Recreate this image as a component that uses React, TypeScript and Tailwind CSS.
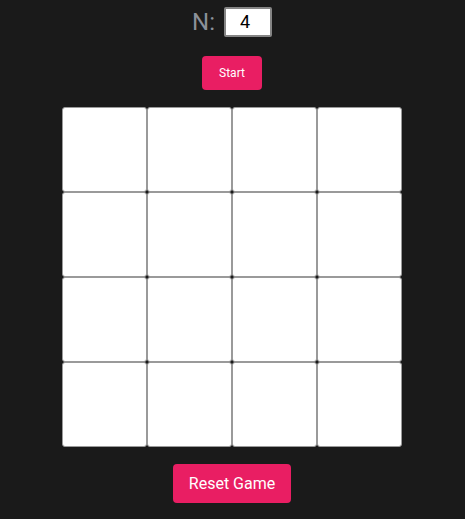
const cells = Array.from({ length: 16 }, (_, i) => i);

export default function App() {
  return (
    <div className="min-h-[519px] w-full bg-[#1a1a1a] flex flex-col items-center pt-[6px] pr-px font-['Roboto',sans-serif]">
      <div className="flex items-center gap-[9px] h-[31px]">
        <span className="text-[24px] text-[#8b9099] leading-none">N:</span>
        <input
          type="number"
          defaultValue={4}
          className="w-[48px] h-[30px] bg-white text-black text-[18px] pl-[14px] border-2 border-[#858585] rounded-[2px] outline-none [appearance:textfield]"
        />
      </div>
      <button className="mt-[19px] w-[60px] h-[34px] bg-[#e91e63] text-white text-[12px] rounded-[4px]">
        Start
      </button>
      <div className="mt-[17px] grid grid-cols-[repeat(4,85px)]">
        {cells.map((c) => (
          <div key={c} className="h-[85px] w-[85px] bg-white border border-[#9a9a9a] rounded-[3px]" />
        ))}
      </div>
      <button className="mt-[17px] w-[118px] h-[39px] bg-[#e91e63] text-white text-[16px] rounded-[4px]">
        Reset Game
      </button>
    </div>
  );
}
